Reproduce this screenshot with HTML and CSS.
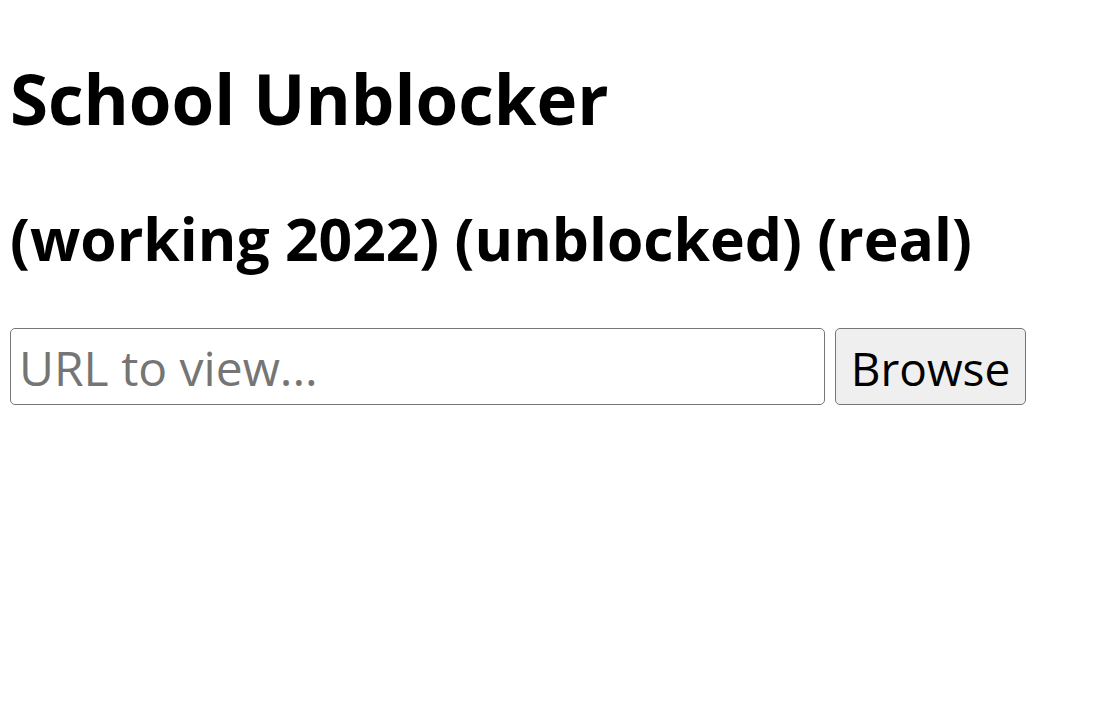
FILE: index.html
```html
<!DOCTYPE html>
<html lang="en">
<head>
    <meta charset="UTF-8">
    <meta name="viewport" content="width=device-width, initial-scale=1.0">
    <title>School Unblocker</title>
    <link rel="stylesheet" href="styles.css">
</head>
<body>
    <h1>School Unblocker</h1>
    <h2>(working 2022) (unblocked) (real)</h2>
    <form class="browse-form" onsubmit="return false;">
        <input type="text" class="url-input" placeholder="URL to view...">
        <button type="submit" class="browse-btn">Browse</button>
    </form>
</body>
</html>
```

FILE: styles.css
```css
/* General Styling */
body {
    font-family: "Comic Sans MS", "Open Sans", sans-serif;
    margin: 0;
    padding: 58px 10px 0;
    background: #ffffff;
    color: #000;
}

h1 {
    font-size: 69px;
    line-height: 80px;
    font-weight: bold;
    margin: 0;
}

h2 {
    font-size: 58.8px;
    line-height: 70px;
    font-weight: bold;
    margin: 65px 0 0;
}

/* Form Styling */
.browse-form {
    display: flex;
    align-items: stretch;
    gap: 10px;
    margin-top: 55px;
}

.url-input {
    width: 815px;
    height: 77px;
    box-sizing: border-box;
    padding: 2px 8px 0;
    border: 1px solid #767676;
    border-radius: 5px;
    font-family: inherit;
    font-size: 48px;
    outline: none;
}

.url-input::placeholder {
    color: #757575;
}

.browse-btn {
    width: 191px;
    height: 77px;
    box-sizing: border-box;
    padding: 2px 6px 0;
    border: 1px solid #767676;
    border-radius: 5px;
    background: #efefef;
    color: #000;
    font-family: inherit;
    font-size: 46px;
    cursor: pointer;
}
```
